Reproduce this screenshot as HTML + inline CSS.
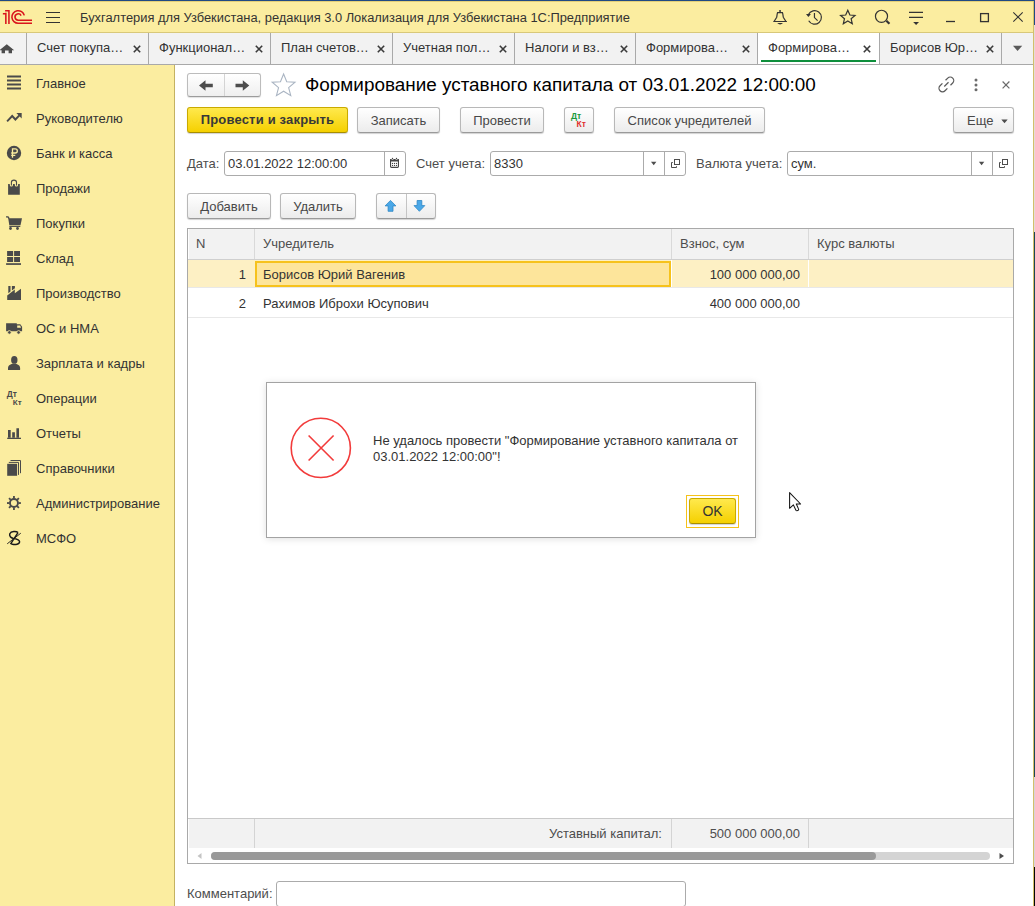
<!DOCTYPE html>
<html><head><meta charset="utf-8">
<style>
*{margin:0;padding:0;box-sizing:border-box}
html,body{width:1035px;height:906px;overflow:hidden;background:#fff}
body{position:relative;font-family:"Liberation Sans",sans-serif;font-size:13px;color:#333}
.a{position:absolute}
.t{position:absolute;white-space:nowrap;line-height:1}
#desk-top{left:0;top:0;width:1035px;height:1px;background:#1f4a84}
#desk-right{left:1034px;top:0;width:1px;height:906px;background:linear-gradient(#1f4a84 0,#1f4a84 25px,#e6dcd8 25px,#e6dcd8 232px,#1b4756 232px,#1b4756 777px,#d8d3da 777px,#d8d3da 867px,#050505 867px)}
#hdr{left:0;top:1px;width:1034px;height:32px;background:#fbeda0;border-top:1px solid #e3cf78;border-bottom:1px solid #d8c87a;border-right:1px solid #d3bf6a}
#win-right{left:1033px;top:1px;width:1px;height:905px;background:#d3bf6a}
#tabs{left:0;top:33px;width:1033px;height:32px;background:#f2f2f2;border-bottom:1px solid #a9a9a9}
.tsep{position:absolute;top:33px;width:1px;height:31px;background:#a9a9a9}
.tab{position:absolute;top:41px;font-size:13px;color:#333;line-height:1}
.tx{position:absolute;top:45px;width:8px;height:8px}
#side{left:0;top:65px;width:175px;height:841px;background:#fbeda0;border-right:1px solid #c4b262}
.si{position:absolute;left:36px;font-size:13px;color:#333;line-height:1;margin-top:1px}
.ic{position:absolute;left:6px;width:17px;height:16px}
.btn{position:absolute;height:26px;border:1px solid #b8b8b8;border-bottom-color:#9a9a9a;border-radius:3px;background:linear-gradient(#ffffff,#ececec);box-shadow:0 1px 1px rgba(0,0,0,.18);color:#484848;font-size:13px;text-align:center;line-height:24px;padding-top:1px}
.btn.y{background:linear-gradient(#ffe94d,#f5d000);border-color:#c9aa00;border-bottom-color:#a88e00;font-weight:bold;color:#383838;letter-spacing:0.18px;padding-top:0}
.fld{position:absolute;height:25px;border:1px solid #ababab;border-radius:3px;background:#fff}
.lbl{position:absolute;font-size:13px;color:#4d4d4d;line-height:1}
</style></head><body>
<div id="desk-top" class="a"></div>
<div id="desk-right" class="a"></div>
<div id="hdr" class="a"></div>
<div id="tabs" class="a"></div>
<div id="side" class="a"></div>
<div id="win-right" class="a"></div>

<!-- logo -->
<svg class="a" style="left:0;top:0" width="34" height="34" viewBox="0 0 34 34">
 <g fill="none" stroke="#d9141c" stroke-width="1.55">
  <path d="M5.1 10.7H9.7M8.94 9.93V24.06M2.87 13.7H6.62M5.85 12.8V24.06"/>
  <path d="M24.29 15.37A6.3 6.3 0 1 0 18.2 23.3H32"/>
  <path d="M21.1 15.65A3.2 3.2 0 1 0 18.2 20.2H32"/>
 </g>
</svg>
<!-- hamburger -->
<svg class="a" style="left:46px;top:11px" width="15" height="13" viewBox="0 0 15 13"><g stroke="#333" stroke-width="1.1"><path d="M0 1.5H14M0 6.5H14M0 11.5H14"/></g></svg>
<div class="t" style="left:80px;top:12px;font-size:12.88px;color:#333">Бухгалтерия для Узбекистана, редакция 3.0 Локализация для Узбекистана 1С:Предприятие</div>

<!-- header icons -->
<svg class="a" style="left:760px;top:2px" width="274" height="30" viewBox="760 2 274 30">
 <g fill="none" stroke="#333" stroke-width="1.2">
  <path d="M773.3 21.5H786.9M774.2 21.2L776.7 17.2C777 15.6 777.1 13.8 777.6 12.6H782.4C782.9 13.8 783 15.6 783.3 17.2L785.8 21.2"/>
  <path d="M808.44 14.5A6.8 6.8 0 1 1 808.7 20.8"/>
  <path d="M814.45 13.1V17.6L817.6 20.6"/>
  <path d="M847.8 10.2L849.9 15L855 15.4L851.1 18.7L852.3 23.7L847.8 21L843.3 23.7L844.5 18.7L840.6 15.4L845.7 15Z"/>
  <circle cx="881.5" cy="16.3" r="6.05"/>
  <path d="M909 12.3H923M909 17.3H923"/>
  <path d="M946 21.5H955" stroke-width="1.3"/>
  <rect x="980.6" y="13.6" width="7.8" height="8" stroke-width="1.3"/>
  <path d="M1013.3 12.3L1022.7 21.7M1022.7 12.3L1013.3 21.7" stroke-width="1.1"/>
 </g>
 <g fill="#333">
  <path d="M777.2 23.1H783Q780.1 25.9 777.2 23.1Z"/><rect x="779.3" y="10" width="1.5" height="2.4"/>
  <path d="M806 14.1H810.9L808.4 16.9Z"/>
  <path d="M885.6 21.4L887.1 19.9L890.2 23L888.7 24.5Z"/>
  <path d="M913.2 22H919L916.1 24.9Z"/>
 </g>
</svg>
<!-- tabs -->
<div class="a" style="left:758px;top:33px;width:121px;height:31px;background:#fff"></div>
<div class="a" style="left:761px;top:60px;width:115px;height:2px;background:#0e8f3c"></div>
<div class="tsep" style="left:26px"></div>
<div class="tsep" style="left:148px"></div>
<div class="tsep" style="left:270px"></div>
<div class="tsep" style="left:392px"></div>
<div class="tsep" style="left:514px"></div>
<div class="tsep" style="left:635px"></div>
<div class="tsep" style="left:757px"></div>
<div class="tsep" style="left:879px"></div>
<div class="tsep" style="left:1001px"></div>
<div class="tab" style="left:37px">Счет покупа…</div>
<svg class="tx" style="left:133px" viewBox="0 0 8 8"><path d="M0.8 0.8L7.2 7.2M7.2 0.8L0.8 7.2" stroke="#3a3a3a" stroke-width="1.6"/></svg>
<div class="tab" style="left:159px">Функционал…</div>
<svg class="tx" style="left:255px" viewBox="0 0 8 8"><path d="M0.8 0.8L7.2 7.2M7.2 0.8L0.8 7.2" stroke="#3a3a3a" stroke-width="1.6"/></svg>
<div class="tab" style="left:281px">План счетов…</div>
<svg class="tx" style="left:377px" viewBox="0 0 8 8"><path d="M0.8 0.8L7.2 7.2M7.2 0.8L0.8 7.2" stroke="#3a3a3a" stroke-width="1.6"/></svg>
<div class="tab" style="left:403px">Учетная пол…</div>
<svg class="tx" style="left:499px" viewBox="0 0 8 8"><path d="M0.8 0.8L7.2 7.2M7.2 0.8L0.8 7.2" stroke="#3a3a3a" stroke-width="1.6"/></svg>
<div class="tab" style="left:525px">Налоги и вз…</div>
<svg class="tx" style="left:620px" viewBox="0 0 8 8"><path d="M0.8 0.8L7.2 7.2M7.2 0.8L0.8 7.2" stroke="#3a3a3a" stroke-width="1.6"/></svg>
<div class="tab" style="left:646px">Формирова…</div>
<svg class="tx" style="left:742px" viewBox="0 0 8 8"><path d="M0.8 0.8L7.2 7.2M7.2 0.8L0.8 7.2" stroke="#3a3a3a" stroke-width="1.6"/></svg>
<div class="tab" style="left:768px">Формирова…</div>
<svg class="tx" style="left:863px" viewBox="0 0 8 8"><path d="M0.8 0.8L7.2 7.2M7.2 0.8L0.8 7.2" stroke="#3a3a3a" stroke-width="1.6"/></svg>
<div class="tab" style="left:890px">Борисов Юр…</div>
<svg class="tx" style="left:986px" viewBox="0 0 8 8"><path d="M0.8 0.8L7.2 7.2M7.2 0.8L0.8 7.2" stroke="#3a3a3a" stroke-width="1.6"/></svg>
<svg class="a" style="left:-1px;top:44px" width="16" height="10" viewBox="0 0 16 10"><path d="M7.8 0.3L15.2 6.3H13V9.3H9.6V6.5H6V9.3H2.6V6.3H0.4Z" fill="#4d4d4d"/></svg>
<svg class="a" style="left:1013px;top:45px" width="10" height="7" viewBox="0 0 10 7"><path d="M0 0.8H9.2L4.6 6Z" fill="#5a5a5a"/></svg>
<!-- sidebar -->
<div class="si" style="top:76px">Главное</div>
<div class="si" style="top:111px">Руководителю</div>
<div class="si" style="top:146px">Банк и касса</div>
<div class="si" style="top:181px">Продажи</div>
<div class="si" style="top:216px">Покупки</div>
<div class="si" style="top:251px">Склад</div>
<div class="si" style="top:286px">Производство</div>
<div class="si" style="top:321px">ОС и НМА</div>
<div class="si" style="top:356px">Зарплата и кадры</div>
<div class="si" style="top:391px">Операции</div>
<div class="si" style="top:426px">Отчеты</div>
<div class="si" style="top:461px">Справочники</div>
<div class="si" style="top:496px">Администрирование</div>
<div class="si" style="top:531px">МСФО</div>
<svg class="a" style="left:0;top:0" width="30" height="560" viewBox="0 0 30 560"><path d="M7 76.5H21M7 80.5H21M7 84.5H21M7 88.5H21" stroke="#4a4a4a" stroke-width="1.8"/><path d="M7.1 121.3L12.2 116L15.4 119.5L19.4 115.3" stroke="#4a4a4a" stroke-width="1.9" fill="none"/><path d="M16.4 113.1H21.7V118.4Z" fill="#4a4a4a"/><circle cx="14" cy="153" r="7.2" fill="#4a4a4a"/><path d="M12.5 157.8V148.8H15.2A2.1 2.1 0 0 1 15.2 153H11.2M11.2 155.3H15.3" stroke="#fbeda0" stroke-width="1.3" fill="none"/><path d="M8.1 194.7V184.1H9.8V184.9A1.6 1.6 0 0 0 13 184.9V184.1H14.8V184.9A1.65 1.65 0 0 0 18.1 184.9V184.1H19.8V194.7Z" fill="#4a4a4a"/><path d="M11.4 185.4V182.2A2.55 2.1 0 0 1 16.5 182.2V185.4" stroke="#4a4a4a" stroke-width="1.1" fill="none"/><path d="M6 216.9H8L9.2 218.6" stroke="#4a4a4a" stroke-width="1.4" fill="none"/><path d="M8.2 218.2H22L20.5 225.2H9.3Z" fill="#4a4a4a"/><path d="M9.3 226.4H20.3" stroke="#4a4a4a" stroke-width="1.1"/><circle cx="10.5" cy="228.5" r="1.4" fill="#4a4a4a"/><circle cx="17.5" cy="228.5" r="1.4" fill="#4a4a4a"/><path d="M7.1 251H13.1V256.1H7.1ZM14.1 251H20V256.1H14.1ZM7.1 257.1H13.1V262H7.1ZM14.1 257.1H20V262H14.1Z" fill="#4a4a4a"/><path d="M6.1 263.2H21V264.9H6.1Z" fill="#4a4a4a"/><path d="M7.2 300V295.5L14.8 289.6V293.2L21 288.8V300Z" fill="#4a4a4a"/><path d="M8.3 286.1H10.5V291.6L8.3 293.3ZM11.9 286.1H14.9V288.2L11.9 290.6Z" fill="#4a4a4a"/><path d="M6.1 323.2H16.8V324.3H20.3L22.1 326.8V331.2H6.1Z" fill="#4a4a4a"/><path d="M17.2 325.4H20.2L21 327.8H17.2Z" fill="#fbeda0"/><circle cx="9.4" cy="332.4" r="1.8" fill="#4a4a4a" stroke="#fbeda0" stroke-width="0.8"/><circle cx="18.6" cy="332.4" r="1.8" fill="#4a4a4a" stroke="#fbeda0" stroke-width="0.8"/><ellipse cx="14.3" cy="359.9" rx="3.2" ry="3.9" fill="#4a4a4a"/><path d="M8 370V368.3C8 365.3 10.5 363.8 14.1 363.8S20.1 365.3 20.1 368.3V370Z" fill="#4a4a4a"/><text x="6.8" y="396.7" font-size="8.4" font-weight="bold" fill="#4a4a4a" font-family="Liberation Sans">Дт</text><text x="12.8" y="404.6" font-size="8" font-weight="bold" fill="#4a4a4a" font-family="Liberation Sans">Кт</text><path d="M8 430.1H10.7V437.8H8ZM12.2 432.3H14.9V437.8H12.2ZM16.4 428.2H19V437.8H16.4Z" fill="#4a4a4a"/><path d="M7.2 437.7H21V439H7.2Z" fill="#4a4a4a"/><path d="M7.2 463.8H17.1V475.8H7.2Z" fill="#4a4a4a"/><path d="M8.8 462.4H18.5V474.9M10.5 460.5H20.5V473.2" stroke="#4a4a4a" stroke-width="1" fill="none"/><g transform="translate(13.95 503.05)" fill="#4a4a4a"><circle r="4" fill="none" stroke="#4a4a4a" stroke-width="1.9"/><path d="M-0.9 -6.95H0.9V-4.5H-0.9Z" transform="rotate(0)"/><path d="M-0.9 -6.95H0.9V-4.5H-0.9Z" transform="rotate(45)"/><path d="M-0.9 -6.95H0.9V-4.5H-0.9Z" transform="rotate(90)"/><path d="M-0.9 -6.95H0.9V-4.5H-0.9Z" transform="rotate(135)"/><path d="M-0.9 -6.95H0.9V-4.5H-0.9Z" transform="rotate(180)"/><path d="M-0.9 -6.95H0.9V-4.5H-0.9Z" transform="rotate(225)"/><path d="M-0.9 -6.95H0.9V-4.5H-0.9Z" transform="rotate(270)"/><path d="M-0.9 -6.95H0.9V-4.5H-0.9Z" transform="rotate(315)"/></g><path d="M18 532.6C16.5 531 11 530.8 9.8 533.8C9 536 11 537.8 13 538.2C16.5 538.8 19.6 539.6 19.6 541.8C19.6 544.4 15 544.8 12.5 544.2C11.6 544 11 543.8 10.8 543.6L18 532.6" stroke="#1a1a1a" stroke-width="1.45" fill="none"/><path d="M7.2 543.8L20.8 533.2" stroke="#1a1a1a" stroke-width="0.9"/></svg>
<!-- form header -->
<div class="a" style="left:187px;top:73px;width:74px;height:24px;border:1px solid #bcbcbc;border-bottom-color:#9c9c9c;border-radius:3px;background:linear-gradient(#fff,#efefef);box-shadow:0 1px 1px rgba(0,0,0,.12)"></div>
<div class="a" style="left:224px;top:74px;width:1px;height:22px;background:#d4d4d4"></div>
<svg class="a" style="left:187px;top:73px" width="74" height="24" viewBox="187 73 74 24">
 <path d="M199 85.5L205.5 80.2V83.8H212.8V87.2H205.5V90.8Z" fill="#4d4d4d"/>
 <path d="M249.3 85.5L242.8 80.2V83.8H235.5V87.2H242.8V90.8Z" fill="#4d4d4d"/>
</svg>
<svg class="a" style="left:270px;top:72px" width="28" height="26" viewBox="270 72 28 26">
 <path transform="translate(283.6 85.4) scale(1.12) translate(-283.6 -85.4)" d="M283.6 75.2L286.4 82.2L293.8 82.6L288.1 87.4L290 94.6L283.6 90.6L277.2 94.6L279.1 87.4L273.4 82.6L280.8 82.2Z" fill="none" stroke="#a9b4c2" stroke-width="0.95"/>
</svg>
<div class="t" style="left:305px;top:76px;font-size:18.9px;color:#000">Формирование уставного капитала от 03.01.2022 12:00:00</div>
<svg class="a" style="left:930px;top:72px" width="90" height="26" viewBox="930 72 90 26">
 <g fill="none" stroke="#6b6b6b" stroke-width="1.2">
  <g transform="translate(946.4 84.4) rotate(-45)"><path d="M-2.1 -3.5H-5.5A3.5 3.5 0 0 0 -5.5 3.5H-2.1M2.3 3.5H5.4A3.5 3.5 0 0 0 5.4 -3.5H2.3M-3 0H3" stroke-width="1.25" stroke="#5a5a5a"/></g>
  <path d="M1002.6 81.5L1009.4 88.3M1009.4 81.5L1002.6 88.3"/>
 </g>
 <g fill="#6b6b6b"><circle cx="976" cy="80" r="1.5"/><circle cx="976" cy="84.9" r="1.5"/><circle cx="976" cy="89.8" r="1.5"/></g>
</svg>
<!-- command bar -->
<div class="btn y" style="left:187px;top:107px;width:161px">Провести и закрыть</div>
<div class="btn" style="left:357px;top:107px;width:83px">Записать</div>
<div class="btn" style="left:460px;top:107px;width:84px">Провести</div>
<div class="btn" style="left:564px;top:107px;width:30px"></div>
<svg class="a" style="left:564px;top:107px" width="30" height="26" viewBox="0 0 30 26">
 <text x="7" y="12.3" font-family="Liberation Sans" font-size="8.5" font-weight="bold" fill="#1a9a3a">Дт</text>
 <text x="12.5" y="20" font-family="Liberation Sans" font-size="8.5" font-weight="bold" fill="#e0302f">Кт</text>
</svg>
<div class="btn" style="left:614px;top:107px;width:151px">Список учредителей</div>
<div class="btn" style="left:953px;top:107px;width:61px;text-align:left;padding-left:13px">Еще</div>
<svg class="a" style="left:1001px;top:119px" width="7" height="5" viewBox="0 0 7 5"><path d="M0.3 0.6H6.7L3.5 4.2Z" fill="#4d4d4d"/></svg>
<!-- fields -->
<div class="lbl" style="left:187px;top:157px">Дата:</div>
<div class="fld" style="left:224px;top:151px;width:182px"></div>
<div class="a" style="left:384px;top:152px;width:1px;height:23px;background:#ababab"></div>
<div class="t" style="left:228px;top:157px;color:#333">03.01.2022 12:00:00</div>
<svg class="a" style="left:389px;top:156px" width="11" height="13" viewBox="389 156 11 13">
 <rect x="390.55" y="159.55" width="7.9" height="7.8" rx="0.9" fill="none" stroke="#444" stroke-width="1.1"/>
 <rect x="390" y="159" width="9" height="2.5" rx="0.6" fill="#444"/>
 <g fill="#fff"><circle cx="392.5" cy="158.6" r="1.25"/><circle cx="396.5" cy="158.6" r="1.25"/></g>
 <g fill="#444"><circle cx="392.5" cy="158.5" r="0.7"/><circle cx="396.5" cy="158.5" r="0.7"/>
 <circle cx="392.5" cy="163.4" r="0.62"/><circle cx="394.5" cy="163.4" r="0.62"/><circle cx="396.5" cy="163.4" r="0.62"/>
 <circle cx="392.5" cy="165.4" r="0.62"/><circle cx="394.5" cy="165.4" r="0.62"/><circle cx="396.5" cy="165.4" r="0.62"/></g>
</svg>
<div class="lbl" style="left:416px;top:157px">Счет учета:</div>
<div class="fld" style="left:490px;top:151px;width:196px"></div>
<div class="a" style="left:643px;top:152px;width:1px;height:23px;background:#ababab"></div>
<div class="a" style="left:664px;top:152px;width:1px;height:23px;background:#ababab"></div>
<div class="t" style="left:494px;top:157px;color:#333">8330</div>
<div class="lbl" style="left:696px;top:157px">Валюта учета:</div>
<div class="fld" style="left:787px;top:151px;width:227px"></div>
<div class="a" style="left:971px;top:152px;width:1px;height:23px;background:#ababab"></div>
<div class="a" style="left:992px;top:152px;width:1px;height:23px;background:#ababab"></div>
<div class="t" style="left:791px;top:157px;color:#333">сум.</div>
<svg class="a" style="left:0;top:0" width="1035" height="200" viewBox="0 0 1035 200">
 <path d="M651 161.8H656.4L653.7 165.2Z" fill="#4d4d4d"/>
 <path d="M978.9 161.8H984.3L981.6 165.2Z" fill="#4d4d4d"/>
 <g fill="none" stroke="#4d4d4d" stroke-width="1">
  <rect x="674.5" y="159.5" width="5" height="5"/><path d="M672.8 162.5H671.5V167.5H676.5V166.2"/>
  <rect x="1002.5" y="159.5" width="5" height="5"/><path d="M1000.8 162.5H999.5V167.5H1004.5V166.2"/>
 </g>
</svg>
<!-- table commands -->
<div class="btn" style="left:187px;top:193px;width:84px;height:26px;line-height:23px">Добавить</div>
<div class="btn" style="left:280px;top:193px;width:76px;height:26px;line-height:23px">Удалить</div>
<div class="btn" style="left:376px;top:193px;width:60px;height:26px"></div>
<div class="a" style="left:406px;top:194px;width:1px;height:24px;background:#c4c4c4"></div>
<svg class="a" style="left:376px;top:193px" width="60" height="25" viewBox="376 193 60 25">
 <path d="M390.5 200.4L395.9 205.9H393V211.3H388.1V205.9H385.1Z" fill="#4aa8e8" stroke="#2f86c4" stroke-width="0.8" stroke-linejoin="miter"/>
 <path d="M419.4 211.3L424.8 205.6H421.8V200.5H417.1V205.6H414Z" fill="#4aa8e8" stroke="#2f86c4" stroke-width="0.8"/>
</svg>
<!-- table -->
<div class="a" style="left:187px;top:228px;width:827px;height:636px;border:1px solid #a9a9a9;background:#fff"></div>
<div class="a" style="left:189px;top:229px;width:824px;height:30px;background:#f2f2f2"></div>
<div class="a" style="left:188px;top:259px;width:825px;height:1px;background:#cfcfcf"></div>
<div class="a" style="left:254px;top:229px;width:1px;height:30px;background:#d9d9d9"></div>
<div class="a" style="left:671px;top:229px;width:1px;height:30px;background:#d9d9d9"></div>
<div class="a" style="left:808px;top:229px;width:1px;height:30px;background:#d9d9d9"></div>
<div class="t" style="left:196px;top:237px;color:#4d4d4d">N</div>
<div class="t" style="left:263px;top:237px;color:#4d4d4d">Учредитель</div>
<div class="t" style="left:680px;top:237px;color:#4d4d4d">Взнос, сум</div>
<div class="t" style="left:817px;top:237px;color:#4d4d4d">Курс валюты</div>
<!-- row1 -->
<div class="a" style="left:188px;top:260px;width:825px;height:27px;background:#fdf0c4"></div>
<div class="a" style="left:671px;top:260px;width:1px;height:27px;background:#fff"></div>
<div class="a" style="left:808px;top:260px;width:1px;height:27px;background:#fff"></div>
<div class="a" style="left:255px;top:261px;width:416px;height:26px;border:2px solid #f6c21c;background:#fde59b"></div>
<div class="a" style="left:188px;top:287px;width:825px;height:1px;background:#e8e8e8"></div>
<div class="t" style="left:188px;top:268px;width:58px;text-align:right;color:#333">1</div>
<div class="t" style="left:263px;top:268px;color:#333">Борисов Юрий Вагенив</div>
<div class="t" style="left:672px;top:268px;width:128px;text-align:right;color:#333">100 000 000,00</div>
<!-- row2 -->
<div class="a" style="left:188px;top:317px;width:825px;height:1px;background:#e8e8e8"></div>
<div class="t" style="left:188px;top:297px;width:58px;text-align:right;color:#333">2</div>
<div class="t" style="left:263px;top:297px;color:#333">Рахимов Иброхи Юсупович</div>
<div class="t" style="left:672px;top:297px;width:128px;text-align:right;color:#333">400 000 000,00</div>
<!-- footer -->
<div class="a" style="left:188px;top:818px;width:825px;height:1px;background:#c9c9c9"></div>
<div class="a" style="left:189px;top:819px;width:824px;height:29px;background:#f2f2f2"></div>
<div class="a" style="left:254px;top:819px;width:1px;height:29px;background:#d4d4d4"></div>
<div class="a" style="left:671px;top:819px;width:1px;height:29px;background:#d4d4d4"></div>
<div class="a" style="left:808px;top:819px;width:1px;height:29px;background:#d4d4d4"></div>
<div class="t" style="left:255px;top:827px;width:407px;text-align:right;color:#4d4d4d">Уставный капитал:</div>
<div class="t" style="left:672px;top:827px;width:128px;text-align:right;color:#4d4d4d">500 000 000,00</div>
<!-- scrollbar -->
<div class="a" style="left:211px;top:852px;width:779px;height:8px;border-radius:4px;background:#d4d4d4"></div>
<div class="a" style="left:211px;top:852px;width:665px;height:8px;border-radius:4px;background:#999"></div>
<svg class="a" style="left:195px;top:851px" width="812" height="10" viewBox="195 851 812 10">
 <path d="M201.5 853V859L197.5 856Z" fill="#c4c4c4"/>
 <path d="M999.5 853V859L1004 856Z" fill="#4d4d4d"/>
</svg>
<!-- comment -->
<div class="lbl" style="left:187px;top:887px">Комментарий:</div>
<div class="fld" style="left:276px;top:881px;width:410px;height:26px"></div>
<!-- dialog -->
<div class="a" style="left:266px;top:382px;width:490px;height:156px;border:1px solid #a3a3a3;background:#fff;box-shadow:0 1px 7px rgba(0,0,0,.13)"></div>
<svg class="a" style="left:285px;top:412px" width="72" height="72" viewBox="285 412 72 72">
 <circle cx="320.8" cy="447.9" r="29.6" fill="none" stroke="#f23b3b" stroke-width="1.6"/>
 <path d="M308.6 435.5L333.6 460.5M333.6 435.5L308.6 460.5" stroke="#f23b3b" stroke-width="1.6"/>
</svg>
<div class="t" style="left:373px;top:433px;color:#333;line-height:16px;white-space:normal;width:372px">Не удалось провести "Формирование уставного капитала от 03.01.2022 12:00:00"!</div>
<div class="a" style="left:686px;top:495px;width:53px;height:33px;border:1px solid #f5c21b"></div>
<div class="btn y" style="left:689px;top:498px;width:47px;height:26px;color:#333;font-weight:normal;font-size:14px;line-height:25px;letter-spacing:0">OK</div>
<!-- cursor -->
<svg class="a" style="left:780px;top:485px" width="30" height="32" viewBox="780 485 30 32">
 <path d="M789.6 492.6V508.3L793.4 504.9L795.9 510.2Q796.5 511 797.4 510.6L798.2 510.2Q798.9 509.7 798.5 508.9L796.3 504H800.6Z" fill="#fff" stroke="#141414" stroke-width="1.05" stroke-linejoin="round"/>
</svg>
</body></html>
